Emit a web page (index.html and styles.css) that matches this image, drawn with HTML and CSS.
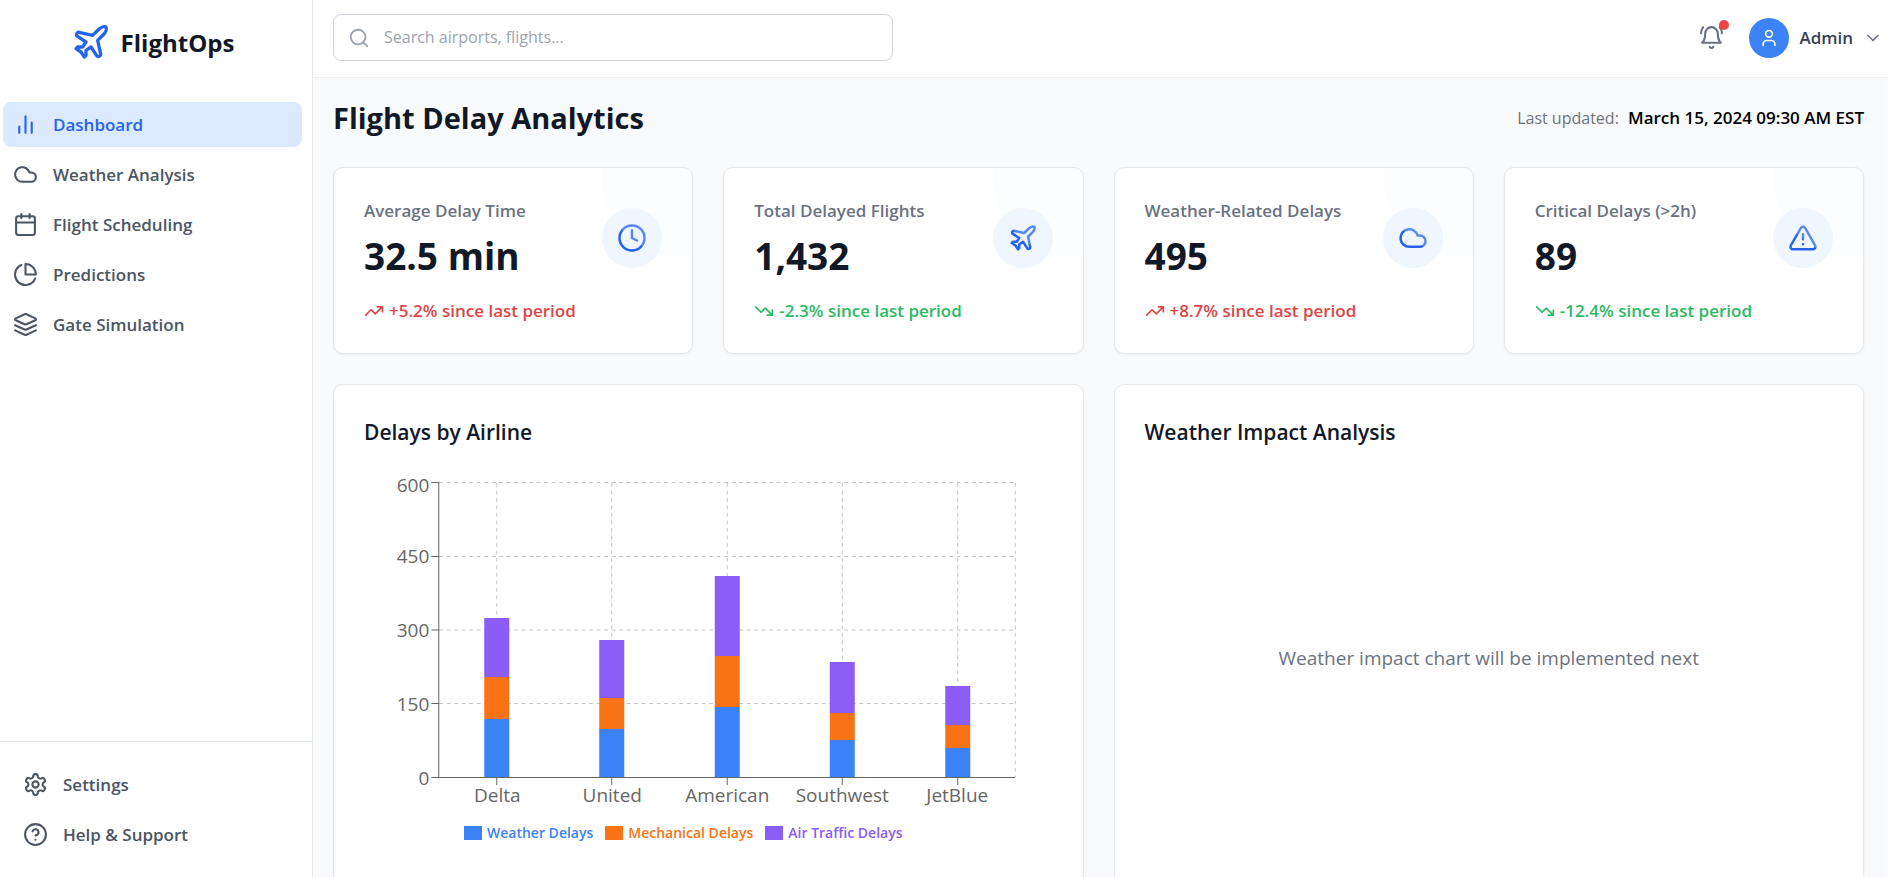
FILE: index.html
```html
<!DOCTYPE html>
<html lang="en">
<head>
<meta charset="utf-8">
<meta name="viewport" content="width=device-width, initial-scale=1">
<title>FlightOps - Flight Delay Analytics</title>
<link rel="stylesheet" href="styles.css">
</head>
<body>
<svg class="sprite" aria-hidden="true">
  <symbol id="plane" viewBox="0 0 24 24"><path d="M17.8 19.2 16 11l3.5-3.5C21 6 21.5 4 21 3c-1-.5-3 0-4.5 1.5L13 8 4.8 6.2c-.5-.1-.9.1-1.1.5l-.3.5c-.2.5-.1 1 .3 1.3L9 12l-2 3H4l-1 1 3 2 2 3 1-1v-3l3-2 3.5 5.3c.3.4.8.5 1.3.3l.5-.2c.4-.3.6-.7.5-1.2z"/></symbol>
  <symbol id="bars" viewBox="0 0 24 24"><path d="M18 20V10M12 20V4M6 20v-6"/></symbol>
  <symbol id="cloud" viewBox="0 0 24 24"><path d="M17.5 19H9a7 7 0 1 1 6.71-9h1.79a4.5 4.5 0 1 1 0 9Z"/></symbol>
  <symbol id="calendar" viewBox="0 0 24 24"><rect x="3" y="4" width="18" height="18" rx="2"/><path d="M16 2v4M8 2v4M3 10h18"/></symbol>
  <symbol id="pie" viewBox="0 0 24 24"><path d="M21.21 15.89A10 10 0 1 1 8 2.83"/><path d="M22 12A10 10 0 0 0 12 2v10z"/></symbol>
  <symbol id="layers" viewBox="0 0 24 24"><path d="m12.83 2.18a2 2 0 0 0-1.66 0L2.6 6.08a1 1 0 0 0 0 1.83l8.58 3.91a2 2 0 0 0 1.66 0l8.58-3.9a1 1 0 0 0 0-1.83Z"/><path d="m22 17.65-9.17 4.16a2 2 0 0 1-1.66 0L2 17.65"/><path d="m22 12.65-9.17 4.16a2 2 0 0 1-1.66 0L2 12.65"/></symbol>
  <symbol id="gear" viewBox="0 0 24 24"><path d="M12.22 2h-.44a2 2 0 0 0-2 2v.18a2 2 0 0 1-1 1.73l-.43.25a2 2 0 0 1-2 0l-.15-.08a2 2 0 0 0-2.73.73l-.22.38a2 2 0 0 0 .73 2.73l.15.1a2 2 0 0 1 1 1.72v.51a2 2 0 0 1-1 1.74l-.15.09a2 2 0 0 0-.73 2.73l.22.38a2 2 0 0 0 2.73.73l.15-.08a2 2 0 0 1 2 0l.43.25a2 2 0 0 1 1 1.73V20a2 2 0 0 0 2 2h.44a2 2 0 0 0 2-2v-.18a2 2 0 0 1 1-1.73l.43-.25a2 2 0 0 1 2 0l.15.08a2 2 0 0 0 2.73-.73l.22-.39a2 2 0 0 0-.73-2.73l-.15-.08a2 2 0 0 1-1-1.74v-.5a2 2 0 0 1 1-1.74l.15-.09a2 2 0 0 0 .73-2.73l-.22-.38a2 2 0 0 0-2.73-.73l-.15.08a2 2 0 0 1-2 0l-.43-.25a2 2 0 0 1-1-1.73V4a2 2 0 0 0-2-2z"/><circle cx="12" cy="12" r="3"/></symbol>
  <symbol id="help" viewBox="0 0 24 24"><circle cx="12" cy="12" r="10"/><path d="M9.09 9a3 3 0 0 1 5.83 1c0 2-3 3-3 3M12 17h.01"/></symbol>
  <symbol id="search" viewBox="0 0 24 24"><circle cx="11" cy="11" r="8"/><path d="m21 21-4.3-4.3"/></symbol>
  <symbol id="bell" viewBox="0 0 24 24"><path d="M6 8a6 6 0 0 1 12 0c0 7 3 9 3 9H3s3-2 3-9M10.3 21a1.94 1.94 0 0 0 3.4 0M4 2C2.8 3.7 2 5.7 2 8M22 8c0-2.3-.8-4.3-2-6"/></symbol>
  <symbol id="user" viewBox="0 0 24 24"><path d="M19 21v-2a4 4 0 0 0-4-4H9a4 4 0 0 0-4 4v2"/><circle cx="12" cy="7" r="4"/></symbol>
  <symbol id="chevron" viewBox="0 0 24 24"><path d="m6 9 6 6 6-6"/></symbol>
  <symbol id="clock" viewBox="0 0 24 24"><circle cx="12" cy="12" r="10"/><path d="M12 6v6l4 2"/></symbol>
  <symbol id="alert" viewBox="0 0 24 24"><path d="m21.73 18-8-14a2 2 0 0 0-3.48 0l-8 14A2 2 0 0 0 4 21h16a2 2 0 0 0 1.73-3ZM12 9v4M12 17h.01"/></symbol>
  <symbol id="up" viewBox="0 0 24 24"><path d="m22 7-8.500 8.500-5-5L2 17M16 7h6v6"/></symbol>
  <symbol id="down" viewBox="0 0 24 24"><path d="m22 17-8.500-8.500-5 5L2 7M16 17h6v-6"/></symbol>
</svg>
<div class="app">
  <aside class="sidebar">
    <div class="brand"><svg class="icon brand-icon"><use href="#plane"/></svg><span class="brand-name">FlightOps</span></div>
    <nav class="nav" aria-label="Main">
      <a class="nav-link active" href="#"><svg class="icon"><use href="#bars"/></svg>Dashboard</a>
      <a class="nav-link" href="#"><svg class="icon"><use href="#cloud"/></svg>Weather Analysis</a>
      <a class="nav-link" href="#"><svg class="icon"><use href="#calendar"/></svg>Flight Scheduling</a>
      <a class="nav-link" href="#"><svg class="icon"><use href="#pie"/></svg>Predictions</a>
      <a class="nav-link" href="#"><svg class="icon"><use href="#layers"/></svg>Gate Simulation</a>
    </nav>
    <nav class="nav nav-footer" aria-label="Support">
      <a class="nav-link" href="#"><svg class="icon"><use href="#gear"/></svg>Settings</a>
      <a class="nav-link" href="#"><svg class="icon"><use href="#help"/></svg>Help &amp; Support</a>
    </nav>
  </aside>
  <div class="content">
    <header class="topbar">
      <label class="search">
        <svg class="icon search-icon" aria-hidden="true"><use href="#search"/></svg>
        <input class="search-input" type="search" placeholder="Search airports, flights..." aria-label="Search airports, flights">
      </label>
      <div class="account">
        <button class="bell" type="button" aria-label="Notifications"><svg class="icon"><use href="#bell"/></svg><span class="dot"></span></button>
        <button class="user" type="button">
          <span class="avatar"><svg class="icon icon-small"><use href="#user"/></svg></span>
          <span>Admin</span>
          <svg class="icon icon-small chevron"><use href="#chevron"/></svg>
        </button>
      </div>
    </header>
    <main class="main">
      <div class="heading">
        <h1 class="title">Flight Delay Analytics</h1>
        <p class="updated">Last updated: <time class="updated-time" datetime="2024-03-15T09:30">March 15, 2024 09:30 AM EST</time></p>
      </div>
      <section class="stats" aria-label="Key figures">
        <article class="card stat">
          <div class="stat-top">
            <div class="stat-text"><h2 class="stat-label">Average Delay Time</h2><p class="stat-value">32.5 min</p></div>
            <span class="stat-icon"><svg class="icon"><use href="#clock"/></svg></span>
          </div>
          <p class="change worse"><svg class="icon icon-small"><use href="#up"/></svg>+5.2% since last period</p>
        </article>
        <article class="card stat">
          <div class="stat-top">
            <div class="stat-text"><h2 class="stat-label">Total Delayed Flights</h2><p class="stat-value">1,432</p></div>
            <span class="stat-icon"><svg class="icon"><use href="#plane"/></svg></span>
          </div>
          <p class="change better"><svg class="icon icon-small"><use href="#down"/></svg>-2.3% since last period</p>
        </article>
        <article class="card stat">
          <div class="stat-top">
            <div class="stat-text"><h2 class="stat-label">Weather-Related Delays</h2><p class="stat-value">495</p></div>
            <span class="stat-icon"><svg class="icon"><use href="#cloud"/></svg></span>
          </div>
          <p class="change worse"><svg class="icon icon-small"><use href="#up"/></svg>+8.7% since last period</p>
        </article>
        <article class="card stat">
          <div class="stat-top">
            <div class="stat-text"><h2 class="stat-label">Critical Delays (&gt;2h)</h2><p class="stat-value">89</p></div>
            <span class="stat-icon"><svg class="icon"><use href="#alert"/></svg></span>
          </div>
          <p class="change better"><svg class="icon icon-small"><use href="#down"/></svg>-12.4% since last period</p>
        </article>
      </section>
      <div class="panels">
        <section class="card panel">
          <h2 class="panel-title">Delays by Airline</h2>
          <div class="panel-body">
            <svg class="chart" viewBox="0 0 688 360" role="img" aria-label="Stacked bar chart of delays by airline">
              <path class="grid" d="M75 24.500H651M75 98.500H651M75 172H651M75 245.500H651M132.500 25V319M247.500 25V319M363 25V319M478 25V319M593.500 25V319M651 25V319"/>
              <g class="weather">
                <rect x="120" y="261" width="25" height="58"/><rect x="235" y="271" width="25" height="48"/><rect x="350.500" y="249" width="25" height="70"/><rect x="465.500" y="282" width="25" height="37"/><rect x="581" y="290" width="25" height="29"/>
              </g>
              <g class="mechanical">
                <rect x="120" y="219" width="25" height="42"/><rect x="235" y="240" width="25" height="31"/><rect x="350.500" y="198" width="25" height="51"/><rect x="465.500" y="255" width="25" height="27"/><rect x="581" y="267" width="25" height="23"/>
              </g>
              <g class="traffic">
                <rect x="120" y="160" width="25" height="59"/><rect x="235" y="182" width="25" height="58"/><rect x="350.500" y="118" width="25" height="80"/><rect x="465.500" y="204" width="25" height="51"/><rect x="581" y="228" width="25" height="39"/>
              </g>
              <path class="axis" d="M74.500 24V319M67 24.500h8M67 98.500h8M67 172h8M67 245.500h8M67 319.500H651M132.500 319v8M247.500 319v8M363 319v8M478 319v8M593.500 319v8"/>
              <g class="tick tick-y">
                <text x="65" y="34">600</text><text x="65" y="105">450</text><text x="65" y="179">300</text><text x="65" y="253">150</text><text x="65" y="327">0</text>
              </g>
              <g class="tick tick-x">
                <text x="133" y="344">Delta</text><text x="248" y="344">United</text><text x="363" y="344">American</text><text x="478" y="344">Southwest</text><text x="593" y="344">JetBlue</text>
              </g>
            </svg>
            <ul class="legend">
              <li class="weather">Weather Delays</li>
              <li class="mechanical">Mechanical Delays</li>
              <li class="traffic">Air Traffic Delays</li>
            </ul>
          </div>
        </section>
        <section class="card panel">
          <h2 class="panel-title">Weather Impact Analysis</h2>
          <div class="panel-body placeholder"><p>Weather impact chart will be implemented next</p></div>
        </section>
      </div>
    </main>
  </div>
</div>
</body>
</html>
```
FILE: styles.css
```css
*, *::before, *::after { box-sizing: border-box; }

body {
  margin: 0;
  font: 17px/25px "Open Sans", "Noto Sans", sans-serif;
  color: #111827;
  background: #f9fafb;
}

h1, h2, p, ul { margin: 0; padding: 0; }
button, input { font: inherit; color: inherit; }
button { padding: 0; border: 0; background: none; cursor: pointer; }

.sprite { display: none; }

.icon {
  flex: none;
  width: 25px;
  height: 25px;
  fill: none;
  stroke: currentColor;
  stroke-width: 2;
  stroke-linecap: round;
  stroke-linejoin: round;
}
.icon-small { width: 20px; height: 20px; }

.app { display: flex; height: 100vh; overflow: hidden; }

/* Sidebar */
.sidebar {
  display: flex;
  flex: none;
  flex-direction: column;
  width: 313px;
  border-right: 1px solid #e5e7eb;
  background: #fff;
}
.brand {
  display: flex;
  align-items: center;
  justify-content: center;
  gap: 10px;
  padding: 22px 10px 20px 3px;
}
.brand-icon { width: 40px; height: 40px; color: #2563eb; }
.brand-name { padding-top: 2px; font-size: 24px; line-height: 38px; font-weight: 700; }
.nav {
  display: flex;
  flex-direction: column;
  gap: 5px;
  padding: 20px 10px 20px 3px;
}
.nav-link {
  display: flex;
  align-items: center;
  gap: 15px;
  padding: 10px;
  border-radius: 8px;
  color: #4b5563;
  font-weight: 550;
  text-decoration: none;
}
.nav-link.active { background: #dbeafe; color: #2563eb; }
.nav-footer {
  margin-top: auto;
  padding: 20px 13px;
  border-top: 1px solid #e5e7eb;
}

/* Top bar */
.content { display: flex; flex: 1; flex-direction: column; min-width: 0; }
.topbar {
  display: flex;
  flex: none;
  align-items: center;
  justify-content: space-between;
  padding: 14px 5px 16px 20px;
  background: #fff;
  border-bottom: 1px solid #eceeef;
}
.search {
  display: flex;
  align-items: center;
  gap: 14px;
  width: 560px;
  padding: 10px 14px;
  border: 1px solid #d1d5db;
  border-radius: 8px;
}
.search-icon { width: 22px; height: 22px; color: #9ca3af; }
.search-input { flex: 1; min-width: 0; height: 25px; padding: 0; border: 0; outline: 0; background: none; font-size: 16px; }
.search-input::placeholder { color: #9ca3af; opacity: 1; }
.account { display: flex; align-items: center; gap: 25px; }
.bell { position: relative; display: flex; color: #6b7280; }
.dot {
  position: absolute;
  top: -5px;
  right: -5px;
  width: 10px;
  height: 10px;
  border-radius: 50%;
  background: #ef4444;
}
.user { display: flex; align-items: center; gap: 10px; color: #374151; font-weight: 550; }
.avatar {
  display: grid;
  place-items: center;
  width: 40px;
  height: 40px;
  border-radius: 50%;
  background: #3b82f6;
  color: #fff;
}
.chevron { color: #6b7280; }

/* Page */
.main {
  flex: 1;
  overflow: auto;
  scrollbar-width: none;
  padding: 20px;
  border-right: 4px solid #fcfcfc;
}
.heading {
  display: flex;
  align-items: center;
  justify-content: space-between;
  margin-bottom: 29px;
}
.title { font-size: 29px; line-height: 40px; font-weight: 700; }
.updated { color: #6b7280; font-size: 16px; }
.updated-time { margin-left: 5px; color: #000; font-size: 17px; font-weight: 550; }

.card {
  border: 1px solid #e5e7eb;
  border-radius: 10px;
  background: #fff;
  box-shadow: 0 1px 3px rgba(0, 0, 0, 0.05);
}
.stats { display: grid; grid-template-columns: repeat(4, 1fr); gap: 30px; margin-bottom: 30px; }
.stat { position: relative; overflow: hidden; padding: 30px; }
.stat::after {
  content: "";
  position: absolute;
  top: -71px;
  right: -70px;
  width: 160px;
  height: 160px;
  border-radius: 50%;
  background: #eff6ff;
  opacity: 0.25;
}
.stat-top { display: flex; align-items: center; justify-content: space-between; }
.stat-text { display: flex; flex-direction: column; gap: 10px; }
.stat-label { color: #6b7280; font-size: 17px; font-weight: 550; }
.stat-value { font-size: 37px; line-height: 45px; font-weight: 700; }
.stat-icon {
  display: grid;
  place-items: center;
  width: 60px;
  height: 60px;
  border-radius: 50%;
  background: #eff6ff;
  color: #2563eb;
}
.stat-icon .icon { width: 30px; height: 30px; }
.change { display: flex; align-items: center; gap: 5px; margin-top: 20px; font-weight: 550; }
.worse { color: #dc4646; }
.better { color: #2dba62; }

.panels { display: grid; grid-template-columns: repeat(2, 1fr); gap: 30px; }
.panel { padding: 30px; }
.panel-title { margin-bottom: 8px; font-size: 21px; line-height: 35px; font-weight: 600; }
.panel-body { height: 400px; }
.placeholder { display: grid; place-items: center; color: #6b7280; font-size: 19px; }

/* Chart */
.chart { display: block; width: 100%; height: 360px; }
.grid { fill: none; stroke: #c4c4c4; stroke-dasharray: 3.75; }
.axis { fill: none; stroke: #666; }
.tick { fill: #666; font-size: 19px; }
.tick-y { text-anchor: end; }
.tick-x { text-anchor: middle; }
.weather { color: #3b82f6; fill: #3b82f6; }
.mechanical { color: #f97316; fill: #f97316; }
.traffic { color: #8b5cf6; fill: #8b5cf6; }
.legend {
  display: flex;
  justify-content: center;
  gap: 12px;
  padding-right: 50px;
  list-style: none;
  font-size: 14px;
  line-height: 30px;
  font-weight: 600;
}
.legend li { display: flex; align-items: center; gap: 5px; }
.legend li::before { content: ""; width: 18px; height: 14px; background: currentColor; }
```
